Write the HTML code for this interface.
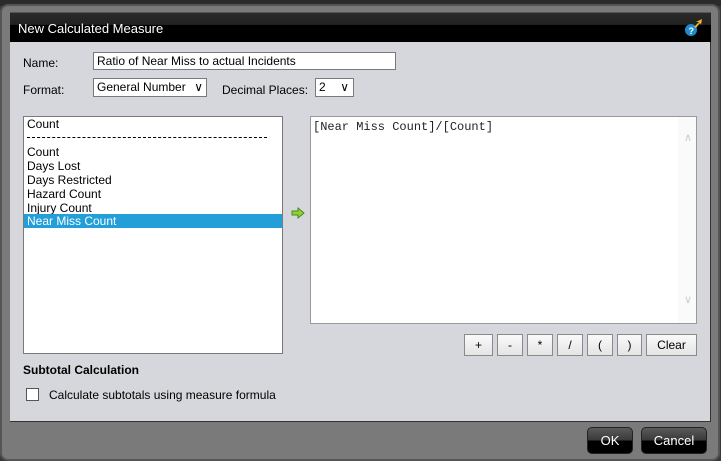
<!DOCTYPE html>
<html><head><meta charset="utf-8"><style>
*{margin:0;padding:0;box-sizing:border-box}
body{width:721px;height:461px;background:#3a3a3a;font-family:"Liberation Sans",sans-serif;font-size:12px;color:#000;position:relative;overflow:hidden}
.a{position:absolute}
.frame{left:0;top:4px;width:720px;height:457px;background:#7a7a7a;border:2px solid #555;border-radius:8px}
.title{left:10px;top:12px;width:701px;height:30px;background:linear-gradient(#2a2a2a 0,#222 40%,#000 42%,#000 100%);border-top:1px solid #555;color:#fff;font-size:13px;line-height:32px;padding-left:8px}
.panel{left:10px;top:42px;width:701px;height:380px;background:#d6d7dc;border-right:1px solid #333;border-bottom:1px solid #333}
.box{background:#fff;border:1px solid #7a7a7a}
.sel{background:#fff;border:1px solid #7a7a7a;height:19px;line-height:16px;padding-left:3px}
.li{position:absolute;left:3px;line-height:14px}
.btn{position:absolute;top:334px;height:22px;background:linear-gradient(#fafafa,#e4e4e4);border:1px solid #8a8a8a;text-align:center;line-height:20px;font-size:12px}
.fb{position:absolute;top:427px;height:27px;border-radius:5px;border:1px solid #222;background:linear-gradient(#5a5a5a 0,#3a3a3a 48%,#000 52%,#000);color:#fff;text-align:center;line-height:25px;font-size:13px}
</style></head><body>
<div class="a" style="left:0;top:0;width:721px;height:6px;background:#2b2b2b"></div>
<div class="a frame"></div>
<div class="a title">New Calculated Measure</div>
<svg class="a" style="left:683px;top:18px" width="24" height="20"><circle cx="8" cy="12" r="6" fill="#1e8ccc"/><text x="5.5" y="16" font-size="9" font-weight="bold" fill="#fff" font-family="Liberation Sans">?</text><path d="M11 9 L16 4 L13 4 L19 1 L18 7 L17 5 L13 10Z" fill="#f3b72a"/></svg>
<div class="a panel"></div>
<div class="a" style="left:23px;top:56px">Name:</div>
<div class="a box" style="left:93px;top:52px;width:303px;height:18px;line-height:16px;padding-left:3px">Ratio of Near Miss to actual Incidents</div>
<div class="a" style="left:23px;top:83px">Format:</div>
<div class="a sel" style="left:93px;top:78px;width:114px">General Number <span style="position:absolute;right:3px;top:0">&#x2228;</span></div>
<div class="a" style="left:222px;top:83px">Decimal Places:</div>
<div class="a sel" style="left:315px;top:78px;width:39px">2 <span style="position:absolute;right:4px;top:0">&#x2228;</span></div>
<div class="a box" style="left:23px;top:116px;width:260px;height:238px">
<div class="li" style="top:0">Count</div>
<div style="position:absolute;left:3px;top:20px;width:240px;border-top:1px dashed #000"></div>
<div class="li" style="top:28px">Count</div>
<div class="li" style="top:42px">Days Lost</div>
<div class="li" style="top:56px">Days Restricted</div>
<div class="li" style="top:70px">Hazard Count</div>
<div class="li" style="top:84px">Injury Count</div>
<div style="position:absolute;left:0;top:97px;width:258px;height:14px;background:#229fd8;color:#fff;line-height:14px;padding-left:3px">Near Miss Count</div>
</div>
<svg class="a" style="left:291px;top:207px" width="14" height="12"><path d="M1 4 H7 V1 L13 6 L7 11 V8 H1Z" fill="#8cd33a" stroke="#4a8a1a"/></svg>
<div class="a box" style="left:310px;top:116px;width:387px;height:208px;border-color:#999">
<div style="position:absolute;left:2px;top:3px;font-family:'Liberation Mono',monospace;font-size:12px;color:#222">[Near Miss Count]/[Count]</div>
<div style="position:absolute;right:0;top:0;width:18px;height:206px;background:#fafafa"></div>
<div style="position:absolute;right:4px;top:14px;color:#ccc;font-size:11px">&#x2227;</div>
<div style="position:absolute;right:4px;top:176px;color:#ccc;font-size:11px">&#x2228;</div>
</div>
<div class="btn" style="left:464px;width:29px">+</div>
<div class="btn" style="left:497px;width:26px">-</div>
<div class="btn" style="left:527px;width:26px">*</div>
<div class="btn" style="left:557px;width:26px">/</div>
<div class="btn" style="left:587px;width:26px">(</div>
<div class="btn" style="left:617px;width:25px">)</div>
<div class="btn" style="left:646px;width:51px">Clear</div>
<div class="a" style="left:23px;top:363px;font-weight:bold;font-size:12px">Subtotal Calculation</div>
<div class="a" style="left:26px;top:388px;width:13px;height:13px;background:#fff;border:1px solid #555"></div>
<div class="a" style="left:49px;top:388px">Calculate subtotals using measure formula</div>
<div class="fb" style="left:587px;width:46px">OK</div>
<div class="fb" style="left:641px;width:66px">Cancel</div>
</body></html>
